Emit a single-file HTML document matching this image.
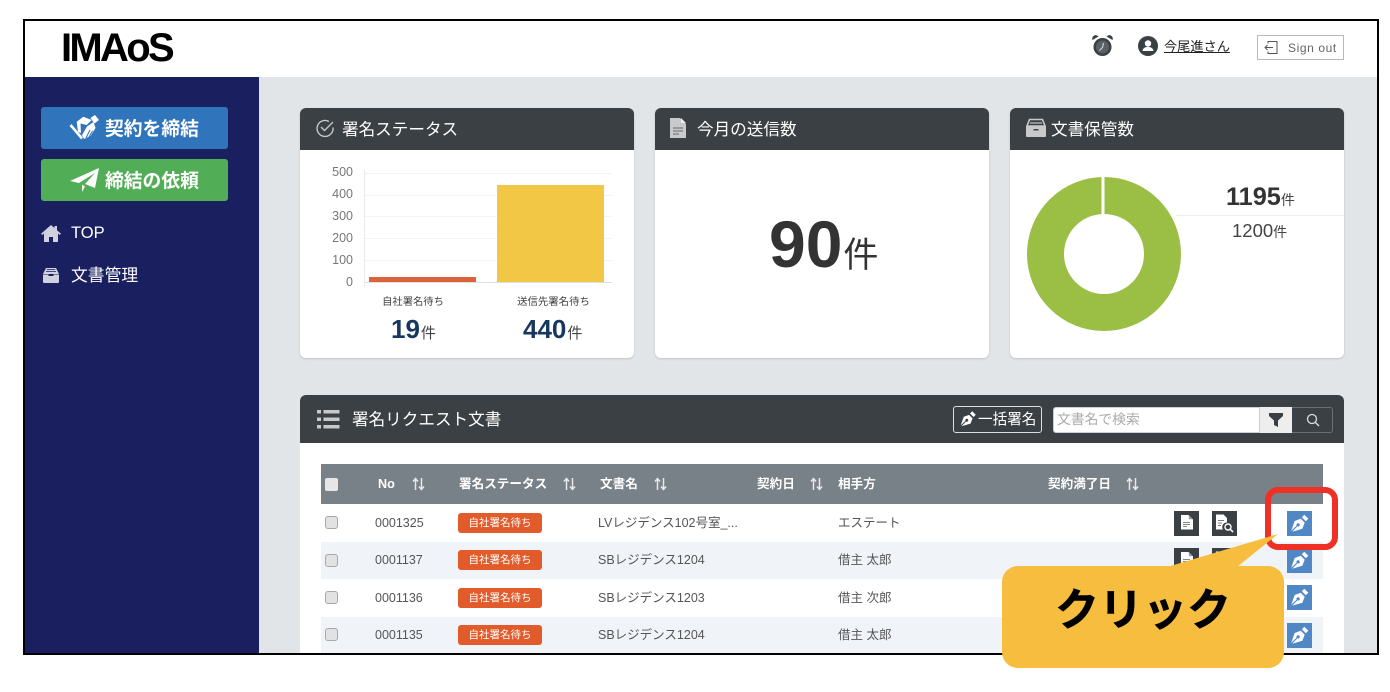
<!DOCTYPE html>
<html lang="ja"><head><meta charset="utf-8"><title>IMAoS</title>
<style>
*{box-sizing:border-box;margin:0;padding:0}
html,body{width:1390px;height:692px;overflow:hidden;background:#fff}
body{position:relative;font-family:"Liberation Sans","Noto Sans CJK JP",sans-serif;color:#333}
.a{position:absolute;white-space:nowrap}
.card{position:absolute;background:#fff;border-radius:6px;box-shadow:0 1px 2px rgba(0,0,0,.15)}
.ch{position:absolute;left:0;top:0;width:100%;height:42px;background:#3a4043;border-radius:6px 6px 0 0;color:#fff;font-size:16.6px;line-height:44px}
.row{position:absolute;left:321px;width:1002px}
.cb{position:absolute;left:325px;width:13px;height:13px;background:#e2e2e2;border:1px solid #a8a8a8;border-radius:3px}
.no{position:absolute;left:375px;font-size:12.5px;color:#555;line-height:16px}
.bd{position:absolute;left:458px;width:84px;height:20px;background:#e25b2a;border-radius:3px;color:#fff;font-size:10.5px;line-height:20px;text-align:center}
.nm{position:absolute;left:598px;font-size:12.5px;color:#555;line-height:16px;white-space:nowrap}
.pt{position:absolute;left:838px;font-size:12.5px;color:#555;line-height:16px}
.pen{position:absolute;left:1287px;width:25px;height:25px;background:#5088c5}
.dk{position:absolute;width:25px;height:25px;background:#3a4043}
.th{position:absolute;top:476px;color:#fff;font-size:12.6px;font-weight:bold;line-height:16px;white-space:nowrap}
.ar{position:absolute;top:477px;width:13px;height:14px}
.g{position:absolute;left:364px;width:248px;height:1px;background:#f3f3f3}
.yl{position:absolute;left:325px;width:28px;text-align:right;font-size:12.5px;color:#777;line-height:14px}
</style></head><body>
<svg width="0" height="0" style="position:absolute"><defs>
<symbol id="pen" viewBox="0 0 25 25"><path d="M14.800 6.200L17.300 3.700 21.300 7.700 18.800 10.200z" fill="#fff"/><path fill-rule="evenodd" d="M13.700 7.800L17.700 11.800 15.300 17.800 5.200 20.800 10.300 15.400A1.700 1.700 0 1 0 9.600 14.700L4.200 19.800 7.700 10z" fill="#fff"/></symbol>
<symbol id="doc" viewBox="0 0 25 25"><path d="M7 4h7.500L19 8.500V18.500H7z" fill="#fff"/><path d="M14.800 4L19 8.200h-4.200z" fill="#9a9fa2"/><path d="M9 11.500h7M9 13.500h7M9 15.500h4" stroke="#888" stroke-width="1"/></symbol>
<symbol id="docs" viewBox="0 0 25 25"><path d="M4 3.500h7.500L15 7v4.500a4.500 4.500 0 0 0-4 7H4z" fill="#fff"/><path d="M6 9.500h6M6 12h4M6 14.500h3" stroke="#777" stroke-width="1"/><circle cx="16" cy="16" r="3" fill="none" stroke="#fff" stroke-width="1.400"/><path d="M18.300 18.300l2.700 2.700" stroke="#fff" stroke-width="1.600"/></symbol>
<symbol id="sort" viewBox="0 0 13 14"><path d="M3.500 13V2M1 4.500L3.500 1.500 6 4.500M9.500 1v11M7 9.500l2.500 3 2.500-3" fill="none" stroke="#e8e8e8" stroke-width="1.500"/></symbol>
</defs></svg>

<!-- frame -->
<div class="a" style="left:23px;top:19px;width:1356px;height:636px;border:2px solid #000;background:#e2e5e8;overflow:hidden"></div>
<div class="a" style="left:25px;top:21px;width:1352px;height:56px;background:#fff"></div>
<div class="a" style="left:25px;top:77px;width:234px;height:576px;background:#1a1f5f"></div>

<!-- header -->
<div class="a" style="left:61px;top:25px;font-size:40px;line-height:46px;font-weight:bold;color:#000;letter-spacing:-2.700px">IMAoS</div>
<svg class="a" style="left:1092px;top:35px" width="21" height="22" viewBox="0 0 21 22"><path d="M0.500 5A3.500 3.500 0 0 1 6.500 1.500zM20.500 5A3.500 3.500 0 0 0 14.500 1.500z" fill="#3a4043"/><circle cx="10.500" cy="12" r="9" fill="#3a4043"/><circle cx="10.500" cy="12" r="6.500" fill="#5a6063"/><path d="M11.500 8L10.500 12.500 7.500 15.500" stroke="#d8d8d8" stroke-width="1.100" fill="none"/></svg>
<svg class="a" style="left:1138px;top:36px" width="20" height="20" viewBox="0 0 20 20"><circle cx="10" cy="10" r="10" fill="#3a4043"/><circle cx="10" cy="7.500" r="3.200" fill="#fff"/><path d="M4.500 15c.6-3 2.500-4 5.500-4s4.900 1 5.500 4z" fill="#fff"/></svg>
<div class="a" style="left:1164px;top:38px;font-size:13.200px;line-height:18px;color:#222;text-decoration:underline">今尾進さん</div>
<div class="a" style="left:1257px;top:35px;width:87px;height:25px;border:1px solid #b4bac0;background:#fff"></div>
<svg class="a" style="left:1263px;top:40px" width="16" height="15" viewBox="0 0 16 15" fill="none" stroke="#555"><path d="M5 3.500V1.500h9v12H5v-2M10 7.500H2M4.500 5L2 7.500 4.500 10"/></svg>
<div class="a" style="left:1288px;top:40px;font-size:12px;line-height:16px;color:#666;letter-spacing:.6px">Sign out</div>

<!-- sidebar -->
<div class="a" style="left:41px;top:107px;width:187px;height:42px;background:#3075bb;border-radius:3px"></div>
<svg class="a" style="left:69px;top:114px" width="32" height="28" viewBox="0 0 32 28"><path d="M7.700 7.700L14.300 2.700 22.700 6 17.700 11 11.500 9.500 12 19 9 18z" fill="#fff"/><path d="M21.500 4L26 1 30 6 25.500 9.500z" fill="#fff"/><path d="M18 12.500L24.500 8 26.500 14 21.500 22 15 25 13 21z" fill="#fff"/><path d="M17 24l4-8M20 23l3.500-6" stroke="#3075bb" stroke-width="1"/><path d="M1.500 11L13 24.500" stroke="#fff" stroke-width="2.600"/></svg>
<div class="a" style="left:105px;top:117px;font-size:18.800px;line-height:24px;font-weight:bold;color:#fff">契約を締結</div>
<div class="a" style="left:41px;top:159px;width:187px;height:42px;background:#52ad57;border-radius:3px"></div>
<svg class="a" style="left:70px;top:167px" width="30" height="26" viewBox="0 0 30 26"><path d="M0 14L29 1 25 21 15 17 25 6 9 16z" fill="#fff"/><path d="M12 17.500V25l3-5.500z" fill="#fff"/></svg>
<div class="a" style="left:105px;top:169px;font-size:18.800px;line-height:24px;font-weight:bold;color:#fff">締結の依頼</div>
<svg class="a" style="left:41px;top:225px" width="20" height="17" viewBox="0 0 20 17"><path d="M10 0L13.500 3V1H16V5.200L20 8.700 18.800 10 17 8.500V17H12V12H8V17H3V8.500L1.200 10 0 8.700z" fill="#d0d0e0"/></svg>
<div class="a" style="left:71px;top:223px;font-size:16.500px;line-height:20px;color:#fff">TOP</div>
<svg class="a" style="left:43px;top:268px" width="16" height="15" viewBox="0 0 16 15"><path d="M3 0h10l3 6H0z" fill="#d0d0e0"/><path d="M3.800 1.500h8.400M3 3.500h10" stroke="#1a1f5f" stroke-width=".8"/><path d="M0 6.500h5.500V8h5V6.500H16V14a1 1 0 0 1-1 1H1a1 1 0 0 1-1-1z" fill="#d0d0e0"/></svg>
<div class="a" style="left:71px;top:266px;font-size:16.800px;line-height:20px;color:#fff">文書管理</div>

<!-- card 1 -->
<div class="card" style="left:300px;top:108px;width:334px;height:250px"><div class="ch" style="padding-left:42px">署名ステータス</div></div>
<svg class="a" style="left:315px;top:118px" width="20" height="20" viewBox="0 0 20 20" fill="none" stroke="#c4c6c8" stroke-width="1.400"><path d="M18 9.500a8 8 0 1 1-4-6"/><path d="M6 9l3.500 3.500L18 4"/></svg>
<div class="g" style="top:173px"></div><div class="g" style="top:195px"></div><div class="g" style="top:216px"></div><div class="g" style="top:238px"></div><div class="g" style="top:260px"></div>
<div class="a" style="left:364px;top:282px;width:248px;height:1px;background:#dfdfdf"></div>
<div class="a" style="left:364px;top:170px;width:1px;height:117px;background:#eaeaea"></div>
<div class="yl" style="top:165px">500</div><div class="yl" style="top:187px">400</div><div class="yl" style="top:209px">300</div><div class="yl" style="top:231px">200</div><div class="yl" style="top:253px">100</div><div class="yl" style="top:275px">0</div>
<div class="a" style="left:369px;top:277px;width:107px;height:5px;background:#dc6239"></div>
<div class="a" style="left:497px;top:185px;width:107px;height:97px;background:#f3c746"></div>
<div class="a" style="left:372px;top:296px;width:82px;text-align:center;font-size:10.300px;line-height:14px;color:#444">自社署名待ち</div>
<div class="a" style="left:503px;top:296px;width:101px;text-align:center;font-size:10.400px;line-height:14px;color:#444">送信先署名待ち</div>
<div class="a" style="left:391px;top:314px;font-size:26px;line-height:30px;font-weight:bold;color:#17375e">19<span style="font-size:15px;font-weight:normal;color:#444;margin-left:1px">件</span></div>
<div class="a" style="left:523px;top:314px;font-size:26px;line-height:30px;font-weight:bold;color:#17375e">440<span style="font-size:15px;font-weight:normal;color:#444;margin-left:1px">件</span></div>

<!-- card 2 -->
<div class="card" style="left:655px;top:108px;width:334px;height:250px"><div class="ch" style="padding-left:42px">今月の送信数</div></div>
<svg class="a" style="left:670px;top:118px" width="16" height="20" viewBox="0 0 16 20"><path d="M0 0h10l6 6v14H0z" fill="#c8c9ca"/><path d="M11 0l5 5h-5z" fill="#eee"/><path d="M3 10h10M3 13h10M3 16h6" stroke="#666" stroke-width="1"/></svg>
<div class="a" style="left:769px;top:205px;font-size:66px;line-height:78px;font-weight:bold;color:#333">90<span style="font-size:35px;font-weight:normal;margin-left:1px">件</span></div>

<!-- card 3 -->
<div class="card" style="left:1010px;top:108px;width:334px;height:250px"><div class="ch" style="padding-left:41px">文書保管数</div></div>
<svg class="a" style="left:1026px;top:118px" width="20" height="20" viewBox="0 0 20 20"><path d="M3.500 1.500h13L19 8H1z" fill="none" stroke="#c8c9ca" stroke-width="1.600"/><path d="M4 5h12" stroke="#c8c9ca" stroke-width="1.200"/><path d="M0 8h20v10a1 1 0 0 1-1 1H1a1 1 0 0 1-1-1z" fill="#c8c9ca"/><rect x="7.500" y="11" width="5" height="1.500" fill="#444"/></svg>
<svg class="a" style="left:1026px;top:176px" width="156" height="156" viewBox="0 0 156 156"><circle cx="78" cy="78" r="58.500" fill="none" stroke="#9bbf44" stroke-width="37"/><rect x="75.500" y="0" width="3" height="39" fill="#fff"/></svg>
<div class="a" style="left:1176px;top:215px;width:168px;height:1px;background:#eee"></div>
<div class="a" style="left:1226px;top:183px;font-size:25.300px;line-height:28px;font-weight:bold;color:#333">1195<span style="font-size:14px;font-weight:normal;color:#444">件</span></div>
<div class="a" style="left:1232px;top:219px;font-size:18.500px;line-height:24px;color:#444">1200<span style="font-size:14px">件</span></div>

<!-- table card -->
<div class="a" style="left:300px;top:395px;width:1044px;height:258px;background:#fff;border-radius:6px 6px 0 0"></div>
<div class="a" style="left:300px;top:395px;width:1044px;height:48px;background:#3a4043;border-radius:6px 6px 0 0"></div>
<svg class="a" style="left:317px;top:409px" width="23" height="20" viewBox="0 0 23 20" fill="#c8c9ca"><rect x="0" y="1" width="4" height="3.500"/><rect x="6.500" y="1" width="16" height="3.500"/><rect x="0" y="8.500" width="4" height="3.500"/><rect x="6.500" y="8.500" width="16" height="3.500"/><rect x="0" y="16" width="4" height="3.500"/><rect x="6.500" y="16" width="16" height="3.500"/></svg>
<div class="a" style="left:352px;top:407px;font-size:16.600px;line-height:26px;color:#fff">署名リクエスト文書</div>
<div class="a" style="left:953px;top:406px;width:89px;height:27px;border:1px solid #ddd;border-radius:3px"></div>
<svg class="a" style="left:957px;top:408px" width="22" height="22" viewBox="0 0 25 25"><use href="#pen"/></svg>
<div class="a" style="left:978px;top:410px;font-size:14.600px;line-height:20px;color:#fff">一括署名</div>
<div class="a" style="left:1053px;top:407px;width:207px;height:26px;background:#fff;border:1px solid #ccd;border-radius:3px 0 0 3px"></div>
<div class="a" style="left:1057px;top:411px;font-size:13.800px;line-height:18px;color:#aaa">文書名で検索</div>
<div class="a" style="left:1260px;top:407px;width:32px;height:26px;background:#eee"></div>
<svg class="a" style="left:1269px;top:413px" width="14" height="14" viewBox="0 0 14 14"><path d="M0 0h14v3L9 7.500V14l-4-2V7.500L0 3z" fill="#3a4043"/></svg>
<div class="a" style="left:1292px;top:407px;width:41px;height:26px;border:1px solid #6a7073;border-left:0;border-radius:0 3px 3px 0"></div>
<svg class="a" style="left:1306px;top:413px" width="14" height="14" viewBox="0 0 14 14" fill="none" stroke="#ddd" stroke-width="1.300"><circle cx="6" cy="6" r="4.500"/><path d="M9.500 9.500L13 13"/></svg>

<!-- table -->
<div class="a" style="left:321px;top:464px;width:1002px;height:40px;background:#788188"></div>
<div class="a" style="left:325px;top:478px;width:13px;height:13px;background:#e6e6e6;border-radius:2px"></div>
<div class="th" style="left:378px">No</div><svg class="ar" style="left:412px"><use href="#sort"/></svg>
<div class="th" style="left:459px">署名ステータス</div><svg class="ar" style="left:563px"><use href="#sort"/></svg>
<div class="th" style="left:600px">文書名</div><svg class="ar" style="left:654px"><use href="#sort"/></svg>
<div class="th" style="left:757px">契約日</div><svg class="ar" style="left:810px"><use href="#sort"/></svg>
<div class="th" style="left:838px">相手方</div>
<div class="th" style="left:1048px">契約満了日</div><svg class="ar" style="left:1126px"><use href="#sort"/></svg>

<div class="row" style="top:504px;height:38px;background:#fff"></div>
<div class="row" style="top:542px;height:37px;background:#f0f4f9"></div>
<div class="row" style="top:579px;height:38px;background:#fff"></div>
<div class="row" style="top:617px;height:36px;background:#f0f4f9"></div>

<div class="cb" style="top:516px"></div><div class="no" style="top:515px">0001325</div><div class="bd" style="top:513px">自社署名待ち</div><div class="nm" style="top:515px">LVレジデンス102号室_...</div><div class="pt" style="top:515px">エステート</div>
<div class="cb" style="top:554px"></div><div class="no" style="top:552px">0001137</div><div class="bd" style="top:550px">自社署名待ち</div><div class="nm" style="top:552px">SBレジデンス1204</div><div class="pt" style="top:552px">借主 太郎</div>
<div class="cb" style="top:591px"></div><div class="no" style="top:590px">0001136</div><div class="bd" style="top:588px">自社署名待ち</div><div class="nm" style="top:590px">SBレジデンス1203</div><div class="pt" style="top:590px">借主 次郎</div>
<div class="cb" style="top:628px"></div><div class="no" style="top:627px">0001135</div><div class="bd" style="top:625px">自社署名待ち</div><div class="nm" style="top:627px">SBレジデンス1204</div><div class="pt" style="top:627px">借主 太郎</div>

<svg class="dk" style="left:1174px;top:511px" viewBox="0 0 25 25"><use href="#doc"/></svg>
<svg class="dk" style="left:1212px;top:511px" viewBox="0 0 25 25"><use href="#docs"/></svg>
<svg class="dk" style="left:1174px;top:548px" viewBox="0 0 25 25"><use href="#doc"/></svg>
<svg class="dk" style="left:1212px;top:548px" viewBox="0 0 25 25"><use href="#docs"/></svg>
<svg class="pen" style="top:511px" viewBox="0 0 25 25"><use href="#pen"/></svg>
<svg class="pen" style="top:548px" viewBox="0 0 25 25"><use href="#pen"/></svg>
<svg class="pen" style="top:585px" viewBox="0 0 25 25"><use href="#pen"/></svg>
<svg class="pen" style="top:623px;height:25px" viewBox="0 0 25 25"><use href="#pen"/></svg>

<!-- annotation -->
<div class="a" style="left:1265px;top:487px;width:73px;height:63px;border:6px solid #ee3124;border-radius:13px"></div>
<svg class="a" style="left:1160px;top:530px" width="130" height="40" viewBox="0 0 130 40"><path d="M118 4L7 37H77z" fill="#f6bd3f"/></svg>
<div class="a" style="left:1002px;top:566px;width:282px;height:102px;background:#f6bd3f;border-radius:16px"></div>
<div class="a" style="left:1002px;top:581px;width:282px;text-align:center;font-size:44px;line-height:60px;font-weight:bold;color:#000;-webkit-text-stroke:.5px #000">クリック</div>
</body></html>
